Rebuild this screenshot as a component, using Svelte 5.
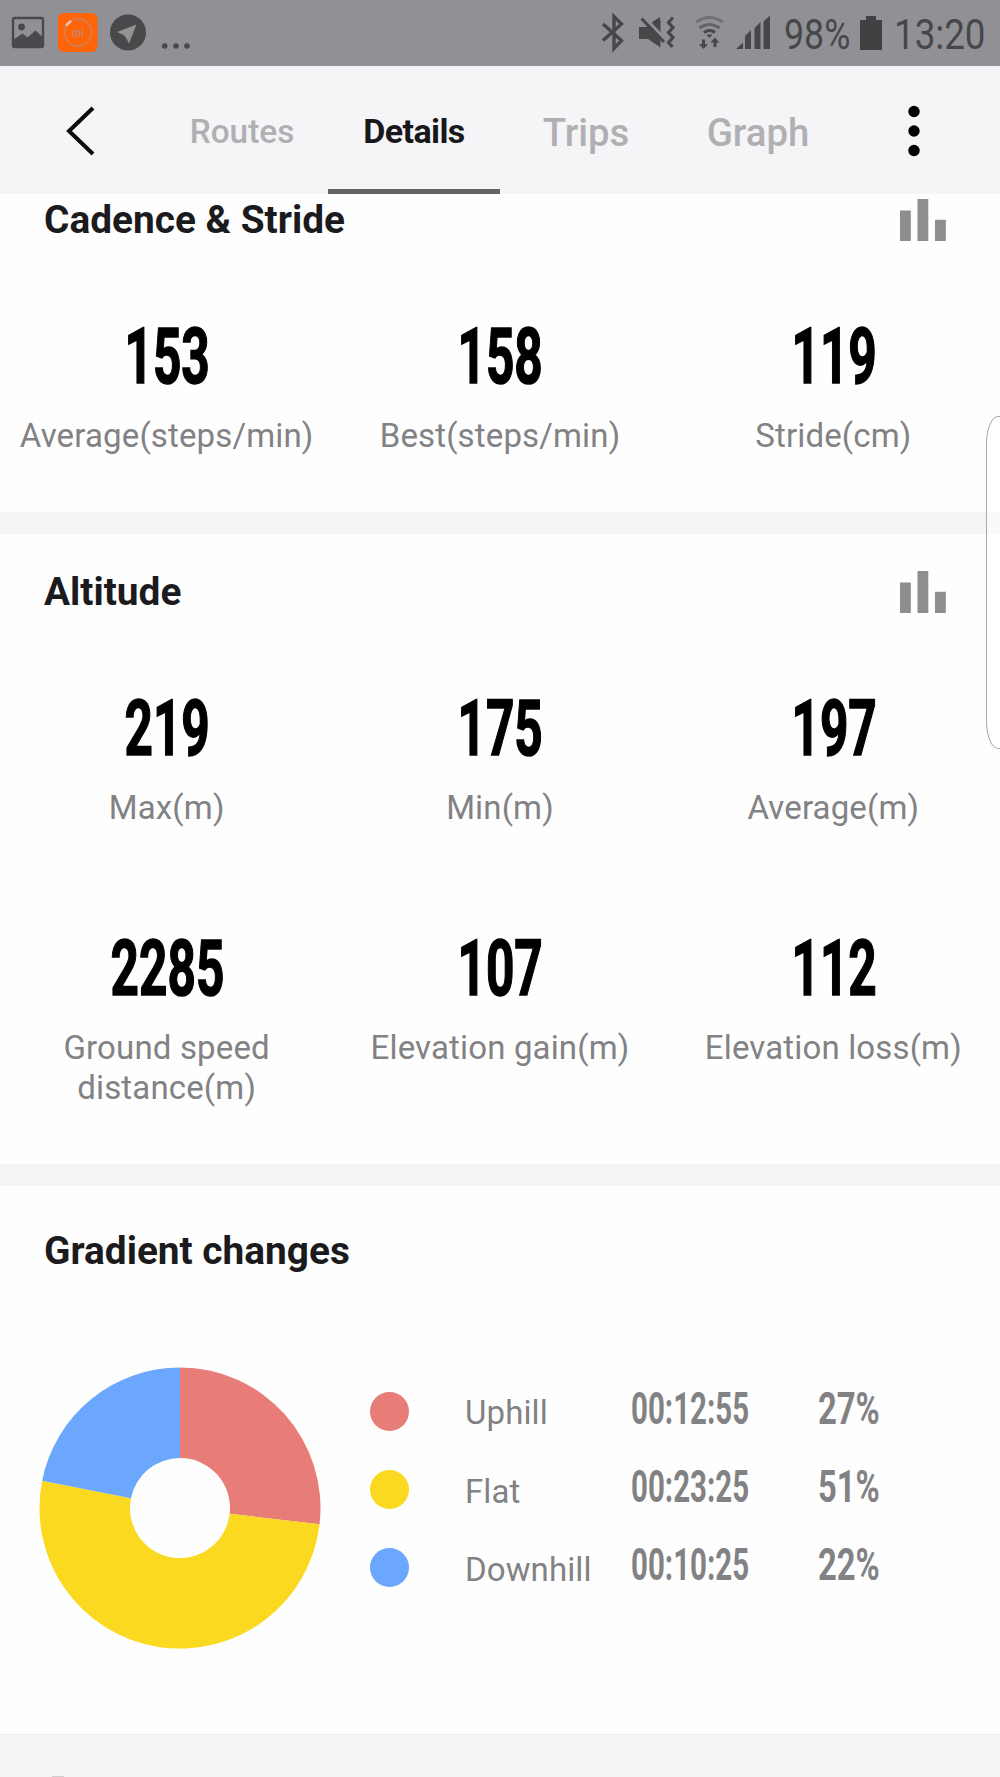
<script>
  const tabs = [
    { label: 'Routes', kind: 'small' },
    { label: 'Details', kind: 'active' },
    { label: 'Trips', kind: 'large' },
    { label: 'Graph', kind: 'large' }
  ];

  const cadence = [
    { value: '153', label: 'Average(steps/min)' },
    { value: '158', label: 'Best(steps/min)' },
    { value: '119', label: 'Stride(cm)' }
  ];

  const altitude = [
    { value: '219', label: 'Max(m)' },
    { value: '175', label: 'Min(m)' },
    { value: '197', label: 'Average(m)' },
    { value: '2285', label: 'Ground speed distance(m)' },
    { value: '107', label: 'Elevation gain(m)' },
    { value: '112', label: 'Elevation loss(m)' }
  ];

  const gradient = [
    { name: 'Uphill', time: '00:12:55', pct: '27%', share: 0.2685, color: '#e77d76' },
    { name: 'Flat', time: '00:23:25', pct: '51%', share: 0.5125, color: '#fad920' },
    { name: 'Downhill', time: '00:10:25', pct: '22%', share: 0.219, color: '#6ba6ff' }
  ];

  // Point on a circle of radius r, with t turns measured clockwise from the top
  function point(t, r) {
    const a = t * 2 * Math.PI;
    return `${(141 + r * Math.sin(a)).toFixed(2)} ${(141 - r * Math.cos(a)).toFixed(2)}`;
  }

  function ring(start, share) {
    const end = start + share;
    const large = share > 0.5 ? 1 : 0;
    return `M${point(start, 140.5)}A140.5 140.5 0 ${large} 1 ${point(end, 140.5)}L${point(end, 50)}A50 50 0 ${large} 0 ${point(start, 50)}Z`;
  }

  const slices = gradient.map((g, i) => ({
    color: g.color,
    d: ring(gradient.slice(0, i).reduce((sum, x) => sum + x.share, 0), g.share)
  }));
</script>

{#snippet heading(title, chart)}
  <div class="heading">
    <h2>{title}</h2>
    {#if chart}
      <svg class="bars" width="46" height="42" viewBox="0 0 46 42">
        <path d="M0 11.5h10.8v30.5H0zM17.5 0h10.8v42H17.5zM35 20.7h10.8V42H35z" />
      </svg>
    {/if}
  </div>
{/snippet}

{#snippet metrics(items)}
  <div class="metrics">
    {#each items as m}
      <div class="metric">
        <span class="value">{m.value}</span>
        <span class="label">{m.label}</span>
      </div>
    {/each}
  </div>
{/snippet}

<div class="screen">
  <div class="status">
    <svg class="notices" width="200" height="66" viewBox="0 0 200 66">
      <rect x="13" y="18" width="30" height="29" rx="2" fill="none" stroke="#47494c" stroke-width="2.4" />
      <circle cx="21.5" cy="27" r="3.4" fill="#47494c" />
      <path d="M13 40l9.500-6.500 5 4 8-7 7.500 7v10H13z" fill="#47494c" />
      <rect x="58" y="13" width="39.500" height="39" rx="6" fill="#ff6408" />
      <circle cx="78" cy="32.500" r="13.500" fill="none" stroke="#c98462" stroke-width="1.300" />
      <path d="M66.500 25l4-3.500" stroke="#e5c3b2" stroke-width="2.500" stroke-linecap="round" />
      <text x="78" y="36.500" text-anchor="middle" textLength="12" lengthAdjust="spacingAndGlyphs">mi</text>
      <circle cx="128" cy="32.500" r="18" fill="#47494a" />
      <path d="M136.500 24.500L117 32l6.500 3 2 2 3.500 6.500z" fill="#929295" />
      <g fill="#47494c">
        <circle cx="164.700" cy="46" r="2.800" /><circle cx="176" cy="46" r="2.800" /><circle cx="187" cy="46" r="2.800" />
      </g>
    </svg>
    <div class="system">
      <svg width="180" height="66" viewBox="596 0 180 66">
        <path d="M603 24l18.500 16.500-7.500 8V16.500l7.500 7.500L603 40.500" fill="none" stroke="#454749" stroke-width="3.400" />
        <path d="M639 27h7l8-6 6.500-1v27.500L648 39h-9z" fill="#454749" />
        <path d="M660 17v10l-7-5.500z" fill="#454749" />
        <path d="M643 16l25 26" stroke="#919195" stroke-width="3" />
        <path d="M641.500 18.500L664 42" stroke="#454749" stroke-width="3" />
        <path d="M673 17.500l-4.500 5 4.500 5-4.500 5 4.500 5-4.500 5 4 4.500" fill="none" stroke="#454749" stroke-width="3.200" />
        <g fill="none" stroke-width="3">
          <path d="M696 22q13.500-9 27 0" stroke="#707174" />
          <path d="M699.500 28q10-7 20 0" stroke="#626366" />
          <path d="M704 32.500q5.500-4 11 0" stroke="#454749" />
        </g>
        <path d="M706.500 34.500h6l-3 3.500z" fill="#454749" />
        <path d="M702 39.500h3V44h3l-4.500 5-4.500-5h3zM713.500 47v-4.500h-3l4.500-5 4.500 5h-3V47z" fill="#454749" />
        <path d="M736 49l7-6.500V49zM745 49V36l6-6v19zM754.500 49V28l6-6v27zM763.500 49V21.500l6.500-6V49z" fill="#454749" />
      </svg>
      <span class="charge">98%</span>
      <svg width="22" height="34" viewBox="0 0 22 34"><path d="M6 0h10v4h6v30H0V4h6z" fill="#3f4143" /></svg>
      <span class="clock">13:20</span>
    </div>
  </div>

  <header>
    <svg class="back" width="30" height="52" viewBox="0 0 30 52"><path d="M27 3L3 26 27 49" fill="none" stroke="#0c0c0e" stroke-width="4" /></svg>
    <nav>
      {#each tabs as t}
        <div class="tab {t.kind}"><span>{t.label}</span></div>
      {/each}
    </nav>
    <svg class="more" width="12" height="52" viewBox="0 0 12 52"><circle cx="6" cy="6.500" r="5.700" /><circle cx="6" cy="26" r="5.700" /><circle cx="6" cy="45.500" r="5.700" /></svg>
  </header>

  <main>
    <section class="scrolled">
      {@render heading('Cadence & Stride', true)}
      {@render metrics(cadence)}
    </section>
    <section>
      {@render heading('Altitude', true)}
      {@render metrics(altitude)}
    </section>
    <section class="gradient">
      {@render heading('Gradient changes', false)}
      <div class="breakdown">
        <svg width="282" height="282" viewBox="0 0 282 282">
          {#each slices as s}
            <path d={s.d} fill={s.color} />
          {/each}
        </svg>
        <div class="legend">
          {#each gradient as g}
            <div class="row">
              <i style="background:{g.color}"></i>
              <span class="name">{g.name}</span>
              <span class="num time">{g.time}</span>
              <span class="num pct">{g.pct}</span>
            </div>
          {/each}
        </div>
      </div>
    </section>
    <div class="next"><i></i></div>
    <div class="edge-handle"></div>
  </main>
</div>

<style>
  :global(body) {
    background: #fefefe;
  }
  .screen {
    display: flex;
    flex-direction: column;
    width: 1000px;
    height: 1777px;
    overflow: hidden;
    font-family: Roboto, 'Liberation Sans', sans-serif;
    background: #f5f5f8;
  }
  svg {
    display: block;
    flex: none;
  }

  .status {
    display: flex;
    justify-content: space-between;
    height: 66px;
    flex: none;
    background: #919195;
    color: #454749;
  }
  .notices text {
    font: 700 13px Roboto, sans-serif;
    fill: #c98462;
  }
  .system {
    display: flex;
    align-items: center;
    width: 404px;
  }
  .charge,
  .clock {
    flex: none;
    font-size: 42px;
    line-height: 66px;
    padding-top: 3px;
    transform-origin: left;
    white-space: nowrap;
  }
  .charge {
    width: 76px;
    margin: 0 0 0 8px;
    transform: scaleX(0.85);
  }
  .clock {
    width: 90px;
    margin-left: 12px;
    transform: scaleX(0.875);
  }

  header {
    display: flex;
    align-items: center;
    height: 128px;
    flex: none;
    box-sizing: border-box;
    background: #f5f5f8;
  }
  .back {
    margin: 1px 60px 0 66px;
  }
  nav {
    display: flex;
    align-self: stretch;
  }
  .tab {
    display: flex;
    justify-content: center;
    width: 172px;
    box-sizing: border-box;
    line-height: 132px;
    font-weight: 500;
    font-size: 33.400px;
    color: #b0b0b2;
    white-space: nowrap;
  }
  .tab.large {
    font-size: 38.400px;
    line-height: 134px;
  }
  .tab.active {
    height: 128px;
    font-size: 34px;
    line-height: 130px;
    font-weight: 700;
    color: #18181b;
    letter-spacing: -0.6px;
    border-bottom: 5px solid #646467;
  }
  .more {
    margin: 1px 0 0 64px;
  }

  main {
    position: relative;
    display: flex;
    flex-direction: column;
    gap: 22px;
    flex: 1;
    overflow: hidden;
  }
  section {
    display: flex;
    flex-direction: column;
    flex: none;
    gap: 71px;
    padding: 33px 0 56px;
    background: #fefefe;
  }
  .scrolled {
    margin-top: -32px;
  }
  .heading {
    display: flex;
    justify-content: space-between;
    align-items: center;
    height: 50px;
    padding: 0 54px 0 44px;
  }
  h2 {
    margin: 0;
    font-size: 38.800px;
    line-height: 50px;
    font-weight: 700;
    color: #1b1b1e;
    white-space: nowrap;
  }
  .bars {
    fill: #8e8e91;
  }
  .metrics {
    display: grid;
    grid-template-columns: repeat(3, 1fr);
    row-gap: 100px;
  }
  .metric {
    display: flex;
    flex-direction: column;
    align-items: center;
    gap: 20px;
  }
  .value {
    margin-left: 1px;
    font-size: 78px;
    line-height: 81px;
    height: 80px;
    font-weight: 700;
    color: #000;
    transform: scaleX(0.636);
    -webkit-text-stroke: 1.5px #000;
  }
  .label {
    max-width: 300px;
    font-size: 33px;
    line-height: 40px;
    letter-spacing: 0.15px;
    text-align: center;
    color: #828285;
  }

  .gradient {
    gap: 91px;
    padding: 40px 0 85px;
  }
  .breakdown {
    display: flex;
    gap: 49px;
    padding-left: 39px;
  }
  .legend {
    padding-top: 5px;
  }
  .row {
    display: grid;
    grid-template-columns: 95px 166px 187px 100px;
    align-items: center;
    height: 78.400px;
    color: #828285;
  }
  .row i {
    width: 39px;
    height: 39px;
    border-radius: 50%;
  }
  .name {
    font-size: 33px;
    line-height: 40px;
    padding-top: 4px;
    letter-spacing: 0.1px;
  }
  .num {
    font-size: 44px;
    line-height: 50px;
    font-weight: 700;
    white-space: nowrap;
    transform-origin: left;
    padding-bottom: 5px;
  }
  .time {
    transform: scaleX(0.67);
  }
  .pct {
    transform: scaleX(0.745);
  }

  .next {
    flex: 1;
    display: flex;
    align-items: flex-end;
    margin-top: -22px;
    padding-left: 52px;
    border-top: 1px solid #ededee;
    background: #f4f4f5;
  }
  .next i {
    width: 12px;
    height: 1px;
    background: #cfcfd1;
  }
  /* Edge panel grip that floats over the page's right side */
  .edge-handle {
    position: absolute;
    top: 222px;
    right: -20px;
    width: 32px;
    height: 331px;
    border: 1px solid #a9a9ac;
    border-radius: 12px / 28px;
    background: rgba(255, 255, 255, 0.5);
  }
</style>
